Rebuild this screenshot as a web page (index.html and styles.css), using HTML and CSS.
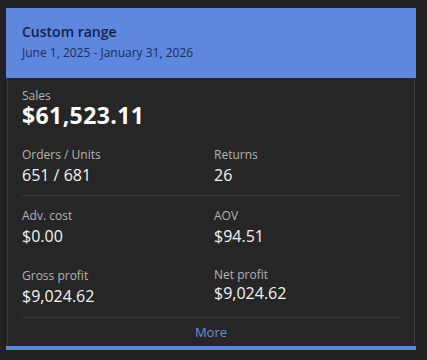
FILE: index.html
```html
<!DOCTYPE html>
<html lang="en">
<head>
    <meta charset="UTF-8">
    <meta name="viewport" content="width=device-width, initial-scale=1.0">
    <title>Custom range</title>
    <link rel="stylesheet" href="styles.css">
</head>
<body>
    <div class="range-card">
        <div class="range-header">
            <div class="range-title">Custom range</div>
            <div class="range-dates">June 1, 2025 - January 31, 2026</div>
        </div>
        <div class="range-body">
            <div class="sales">
                <div class="stat-label">Sales</div>
                <div class="sales-value">$61,523.11</div>
            </div>
            <div class="stats-block first">
                <div class="stat">
                    <div class="stat-label">Orders / Units</div>
                    <div class="stat-value">651 / 681</div>
                </div>
                <div class="stat">
                    <div class="stat-label">Returns</div>
                    <div class="stat-value">26</div>
                </div>
            </div>
            <div class="stats-block">
                <div class="stat">
                    <div class="stat-label">Adv. cost</div>
                    <div class="stat-value">$0.00</div>
                </div>
                <div class="stat">
                    <div class="stat-label">AOV</div>
                    <div class="stat-value">$94.51</div>
                </div>
                <div class="stat">
                    <div class="stat-label">Gross profit</div>
                    <div class="stat-value">$9,024.62</div>
                </div>
                <div class="stat tight">
                    <div class="stat-label">Net profit</div>
                    <div class="stat-value">$9,024.62</div>
                </div>
            </div>
            <div class="more-link">More</div>
        </div>
    </div>
</body>
</html>
```

FILE: styles.css
```css
* {
    margin: 0;
    padding: 0;
    box-sizing: border-box;
}

body {
    font-family: "Open Sans", "Segoe UI", Arial, sans-serif;
    background-color: #222222;
    color: #f2f2f2;
}

.range-card {
    width: 410px;
    margin: 8px 0 0 6px;
    border-bottom: 4px solid #5c86d8;
}

.range-header {
    background: #5d88dd;
    height: 70px;
    padding: 14px 16px 0;
}

.range-title {
    font-size: 14px;
    font-weight: 600;
    line-height: 20px;
    color: #13214b;
}

.range-dates {
    font-size: 12px;
    line-height: 18px;
    margin-top: 2px;
    color: #1b2c5f;
}

.range-body {
    margin: 0 1px;
    background: #262626;
    border-left: 1px solid #3c3c3c;
    border-right: 1px solid #3c3c3c;
    padding: 11px 14px 4px;
}

.stat-label {
    font-size: 12px;
    line-height: 15px;
    color: #b4b4b4;
}

.sales .stat-label {
    line-height: 14px;
}

.sales-value {
    font-size: 23px;
    font-weight: 700;
    line-height: 25px;
    letter-spacing: 0.4px;
    color: #ffffff;
}

.stats-block {
    display: grid;
    grid-template-columns: 192px 1fr;
    row-gap: 22px;
    padding: 12px 0 11px;
    border-bottom: 1px solid #3a3a3a;
}

.stats-block.first {
    padding: 19px 0 10px;
}

.stat-value {
    font-size: 16px;
    line-height: 20px;
    margin-top: 3px;
    color: #f4f4f4;
}

.stat.tight .stat-label {
    margin-top: -1px;
}

.stat.tight .stat-value {
    margin-top: 1px;
}

.more-link {
    text-align: center;
    font-size: 13px;
    line-height: 20px;
    margin-top: 4px;
    color: #6b8fd9;
    cursor: pointer;
}
```
